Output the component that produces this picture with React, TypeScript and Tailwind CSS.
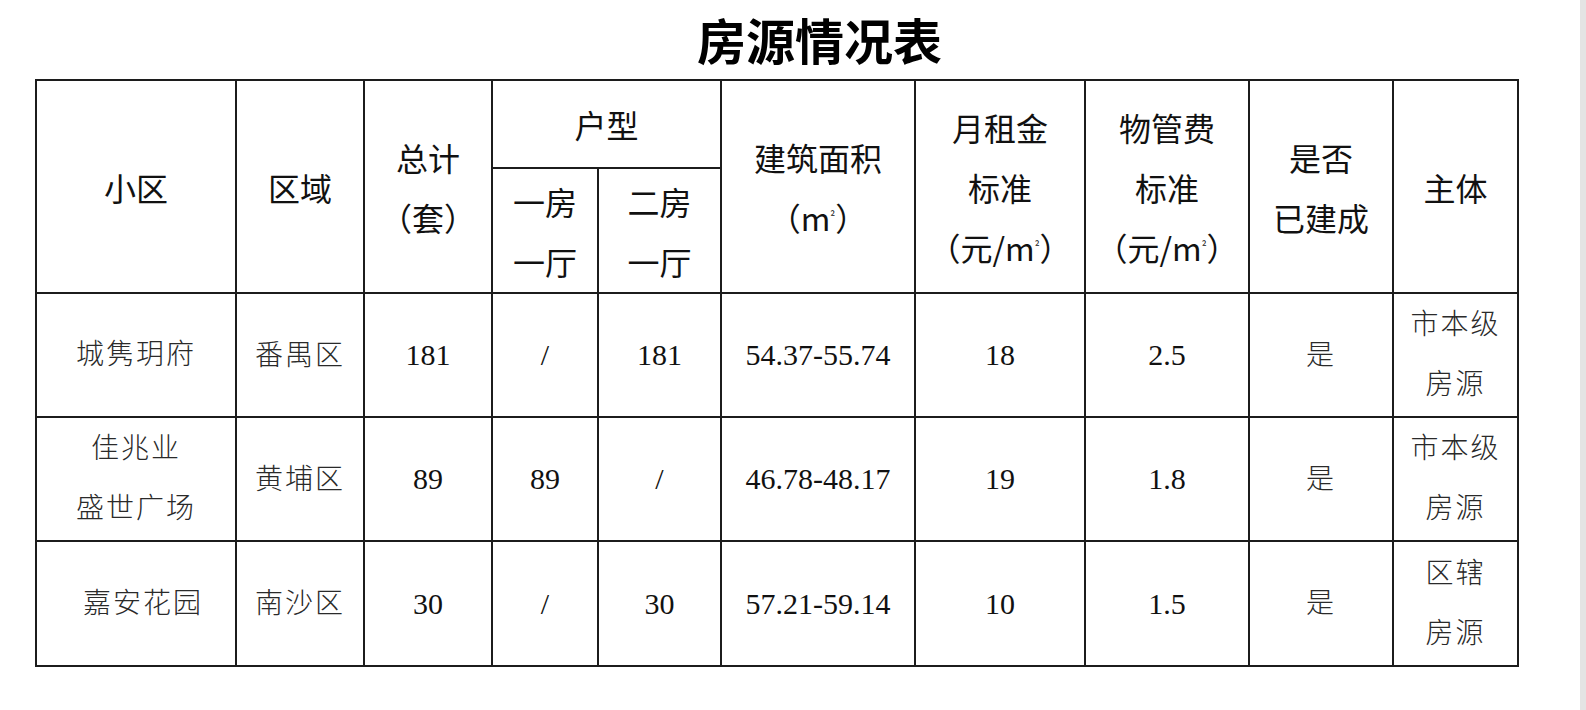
import React from "react";

const hd = "border-2 border-[#1c1c1c] text-center align-middle font-normal text-[32px] leading-[60px] text-[#111] p-0";
const td = "border-2 border-[#1c1c1c] text-center align-middle text-[30px] leading-[60px] text-[#111] p-0";
const cn = "text-[28px] tracking-[2px] text-[#2a2a2a] font-light";

function Sq() {
  return (
    <>
      m<span className="relative -top-[10px] text-[12px] leading-none">²</span>
    </>
  );
}

const rows = [
  { name: ["城隽玥府"], area: "番禺区", total: "181", one: "/", two: "181", size: "54.37-55.74", rent: "18", fee: "2.5", built: "是", owner: ["市本级", "房源"], pad: "" },
  { name: ["佳兆业", "盛世广场"], area: "黄埔区", total: "89", one: "89", two: "/", size: "46.78-48.17", rent: "19", fee: "1.8", built: "是", owner: ["市本级", "房源"], pad: "" },
  { name: ["嘉安花园"], area: "南沙区", total: "30", one: "/", two: "30", size: "57.21-59.14", rent: "10", fee: "1.5", built: "是", owner: ["区辖", "房源"], pad: "pl-[14px]" },
];

export default function App() {
  return (
    <div className="flex h-[710px] w-full bg-white overflow-hidden">
      <div className="flex-1 min-w-0">
        <div className="h-[79px] pl-[697px] pt-[14px] text-[49px] leading-[49px] font-bold text-black font-['Noto_Sans_CJK_SC',sans-serif]">
          房源情况表
        </div>
        <table className="ml-[35px] w-[1482px] table-fixed border-collapse font-['Noto_Sans_CJK_SC',sans-serif]">
          <colgroup>
            <col className="w-[200px]" />
            <col className="w-[128px]" />
            <col className="w-[128px]" />
            <col className="w-[106px]" />
            <col className="w-[123px]" />
            <col className="w-[194px]" />
            <col className="w-[170px]" />
            <col className="w-[164px]" />
            <col className="w-[144px]" />
            <col className="w-[125px]" />
          </colgroup>
          <thead>
            <tr className="h-[88px]">
              <th rowSpan={2} className={hd}>小区</th>
              <th rowSpan={2} className={hd}>区域</th>
              <th rowSpan={2} className={hd}>总计<br />（套）</th>
              <th colSpan={2} className={hd}>户型</th>
              <th rowSpan={2} className={hd}>建筑面积<br />（<Sq />）</th>
              <th rowSpan={2} className={hd}>月租金<br />标准<br />（元/<Sq />）</th>
              <th rowSpan={2} className={hd}>物管费<br />标准<br />（元/<Sq />）</th>
              <th rowSpan={2} className={hd}>是否<br />已建成</th>
              <th rowSpan={2} className={hd}>主体</th>
            </tr>
            <tr className="h-[125px]">
              <th className={hd + " leading-[58px]"}>一房<br />一厅</th>
              <th className={hd + " leading-[58px]"}>二房<br />一厅</th>
            </tr>
          </thead>
          <tbody className="font-['Liberation_Serif','Noto_Sans_CJK_SC',serif]">
            {rows.map((r, i) => (
              <tr key={i} className={i === 2 ? "h-[125px]" : "h-[124px]"}>
                <td className={td}>
                  <div className={cn + " " + r.pad}>
                    {r.name.map((n) => (
                      <div key={n}>{n}</div>
                    ))}
                  </div>
                </td>
                <td className={td}><span className={cn}>{r.area}</span></td>
                <td className={td}>{r.total}</td>
                <td className={td}>{r.one}</td>
                <td className={td}>{r.two}</td>
                <td className={td}>{r.size}</td>
                <td className={td}>{r.rent}</td>
                <td className={td}>{r.fee}</td>
                <td className={td}><span className={cn}>{r.built}</span></td>
                <td className={td}>
                  <div className={cn}>
                    {r.owner.map((n) => (
                      <div key={n}>{n}</div>
                    ))}
                  </div>
                </td>
              </tr>
            ))}
          </tbody>
        </table>
      </div>
      <div className="w-[6px] shrink-0 bg-[#e4e4e4]" />
    </div>
  );
}
